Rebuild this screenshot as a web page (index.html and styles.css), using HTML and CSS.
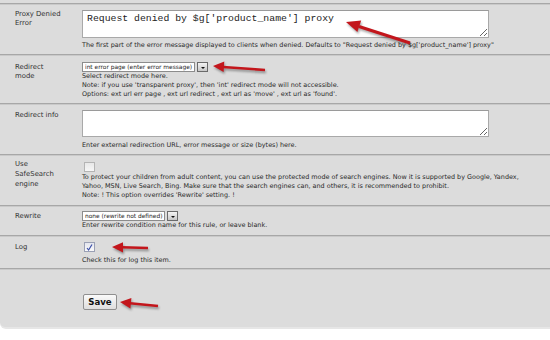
FILE: index.html
```html
<!DOCTYPE html>
<html lang="en">
<head>
  <meta charset="UTF-8" />
  <title>Proxy rule</title>
  <link rel="stylesheet" href="styles.css">
</head>
<body>
  <div class="panel">
    <div class="row row-error">
      <div class="label">Proxy Denied<br>Error</div>
      <div class="field">
        <textarea class="area area-big">Request denied by $g['product_name'] proxy</textarea>
        <div class="desc">The first part of the error message displayed to clients when denied. Defaults to "Request denied by $g['product_name'] proxy"</div>
      </div>
    </div>

    <div class="row row-mode">
      <div class="label">Redirect<br>mode</div>
      <div class="field">
        <div class="select"><span class="select-box">int error page (enter error message)</span><span class="select-btn"></span></div>
        <div class="desc">Select redirect mode here.<br>Note: if you use 'transparent proxy', then 'int' redirect mode will not accessible.<br>Options: ext url err page , ext url redirect , ext url as 'move' , ext url as 'found'.</div>
      </div>
    </div>

    <div class="row row-info">
      <div class="label">Redirect info</div>
      <div class="field">
        <textarea class="area"></textarea>
        <div class="desc">Enter external redirection URL, error message or size (bytes) here.</div>
      </div>
    </div>

    <div class="row row-safe">
      <div class="label">Use<br>SafeSearch<br>engine</div>
      <div class="field">
        <span class="check"></span>
        <div class="desc">To protect your children from adult content, you can use the protected mode of search engines. Now it is supported by Google, Yandex,<br>Yahoo, MSN, Live Search, Bing. Make sure that the search engines can, and others, it is recommended to prohibit.<br>Note: ! This option overrides 'Rewrite' setting. !</div>
      </div>
    </div>

    <div class="row row-rewrite">
      <div class="label">Rewrite</div>
      <div class="field">
        <div class="select"><span class="select-box">none (rewrite not defined)</span><span class="select-btn"></span></div>
        <div class="desc">Enter rewrite condition name for this rule, or leave blank.</div>
      </div>
    </div>

    <div class="row row-log">
      <div class="label">Log</div>
      <div class="field">
        <span class="check checked">
          <svg width="9" height="9" viewBox="0 0 9 9"><path d="M2 5 L3.6 7 L7 1.5" fill="none" stroke="#3b4fa8" stroke-width="1.2"/></svg>
        </span>
        <div class="desc">Check this for log this item.</div>
      </div>
    </div>

    <div class="row row-save">
      <div class="label"></div>
      <div class="field">
        <button class="save">Save</button>
      </div>
    </div>
  </div>

  <svg class="arrows" width="550" height="340" viewBox="0 0 550 340">
    <g fill="#c3161c" stroke="#c3161c">
      <line x1="410" y1="43" x2="359" y2="26.5" stroke-width="3"/>
      <polygon points="346,22 361.2,20.6 357.4,32" stroke="none"/>
      <line x1="265" y1="70" x2="223" y2="67" stroke-width="2.6"/>
      <polygon points="213,66 224.3,61.6 223.6,72" stroke="none"/>
      <line x1="148" y1="248" x2="122" y2="247.3" stroke-width="2.6"/>
      <polygon points="112,247 123,242.2 123,252.4" stroke="none"/>
      <line x1="158" y1="306" x2="130" y2="303.2" stroke-width="2.6"/>
      <polygon points="120,302 131.4,298 130.4,308.4" stroke="none"/>
    </g>
  </svg>
</body>
</html>
```

FILE: styles.css
```css
* {
  box-sizing: border-box;
}

body {
  margin: 0;
  background: #ffffff;
  font-family: "DejaVu Sans", Verdana, sans-serif;
  font-size: 6.45px;
  color: #2a2a2a;
  position: relative;
  width: 550px;
  height: 340px;
  overflow: hidden;
}

.panel {
  background: #dcdcdc;
  padding-top: 3px;
  border-bottom-left-radius: 6px;
  border-bottom: 2px solid #e6e6e6;
}

.row {
  display: grid;
  grid-template-columns: 82px 1fr;
  border-top: 1px solid #a7a7a7;
  box-shadow: inset 0 1px 0 #c9c9c9;
}

.row-error {
  padding: 6px 0 4px;
}

.row-mode {
  padding: 7px 0 4px;
}

.row-info {
  padding: 6px 0 4px;
}

.row-safe {
  padding: 7px 0 5px;
}

.row-rewrite {
  padding: 5px 0 5px;
}

.row-log {
  padding: 6px 0 3px;
}

.row-save {
  padding: 25px 0 17px;
}

.label {
  padding-left: 15px;
  line-height: 9px;
  font-size: 6.9px;
  color: #333333;
  margin-top: 0;
}

.row-mode .label,
.row-info .label,
.row-rewrite .label,
.row-log .label {
  margin-top: 1px;
}

.row-safe .label {
  margin-top: -3px;
  line-height: 10px;
}

.field {
  display: flex;
  flex-direction: column;
  align-items: flex-start;
}

.area {
  display: block;
  width: 407px;
  height: 27px;
  margin: 0;
  padding: 2px 4px;
  border: 1px solid #a9a9a9;
  border-top-color: #9a9a9a;
  background: #ffffff;
  font-family: "Liberation Mono", "Courier New", monospace;
  font-size: 9.8px;
  line-height: 12px;
  color: #222222;
  resize: both;
}

.area-big {
  height: 28px;
}

.desc {
  margin-top: 3px;
  line-height: 9px;
  white-space: nowrap;
}

.row-info .desc,
.row-log .desc {
  margin-top: 4px;
}

.row-safe .desc {
  margin-top: 1px;
}

.row-rewrite .desc,
.row-mode .desc {
  margin-top: 0;
}

.select {
  display: flex;
  align-items: center;
  gap: 2px;
  height: 10px;
}

.select-box {
  display: block;
  height: 10px;
  padding: 0 2px;
  background: #ffffff;
  border: 1px solid #8c8c8c;
  font-size: 5.9px;
  line-height: 8px;
  color: #222222;
}

.select-btn {
  display: block;
  width: 11px;
  height: 10px;
  border: 1px solid #6a6a6a;
  background: linear-gradient(#f4f4f4, #c8c8c8);
  position: relative;
}

.select-btn::after {
  content: "";
  position: absolute;
  left: 3px;
  top: 4px;
  border-left: 2px solid transparent;
  border-right: 2px solid transparent;
  border-top: 2px solid #111111;
}

.check {
  display: block;
  width: 11px;
  height: 10px;
  margin-left: 2px;
  border: 1px solid #b4b4b4;
  background: linear-gradient(#e8e8e8, #f6f6f6);
}

.check.checked {
  border-color: #9aa0b4;
  background: linear-gradient(#e4e6ee, #fafafa);
}

.check svg {
  display: block;
}

.save {
  margin: 0 0 0 1px;
  width: 34px;
  height: 16px;
  padding: 0;
  border: 1px solid #8f8f8f;
  border-radius: 2px;
  background: linear-gradient(#fafafa, #dedede);
  font-family: "DejaVu Sans", Verdana, sans-serif;
  font-weight: bold;
  font-size: 8.6px;
  color: #111111;
}

.arrows {
  position: absolute;
  left: 0;
  top: 0;
  pointer-events: none;
  filter: drop-shadow(1px 2px 1px rgba(0, 0, 0, 0.35));
}
```
